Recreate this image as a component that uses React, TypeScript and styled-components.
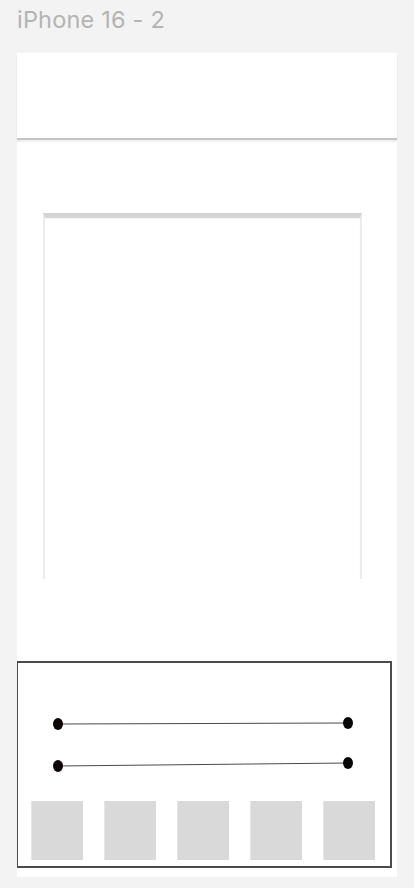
import styled, { createGlobalStyle } from "styled-components";

const GlobalStyle = createGlobalStyle`
  html, body {
    margin: 0;
    padding: 0;
    background: #f3f3f3;
  }
  body {
    font-family: Inter, "Noto Sans", sans-serif;
  }
`;

const sliders = [
  { leftY: 8, rightY: 7 },
  { leftY: 9, rightY: 6 },
];

const thumbs = [1, 2, 3, 4, 5];

function Slider({ leftY, rightY }: { leftY: number; rightY: number }) {
  return (
    <SliderSvg width="373" height="16" viewBox="0 0 373 16">
      <line x1="40" y1={leftY} x2="330" y2={rightY} stroke="#4a4a4a" strokeWidth="1" />
      <ellipse cx="40" cy={leftY} rx="5" ry="6" fill="#0d0606" />
      <ellipse cx="330" cy={rightY} rx="5" ry="6" fill="#0d0606" />
    </SliderSvg>
  );
}

export default function App() {
  return (
    <>
      <GlobalStyle />
      <Page>
        <Title>iPhone 16 - 2</Title>
        <Frame>
          <Header />
          <Stage>
            <Card />
          </Stage>
          <Panel>
            <Sliders>
              {sliders.map((s, i) => (
                <Slider key={i} leftY={s.leftY} rightY={s.rightY} />
              ))}
            </Sliders>
            <Thumbs>
              {thumbs.map((t) => (
                <Thumb key={t} />
              ))}
            </Thumbs>
          </Panel>
        </Frame>
      </Page>
    </>
  );
}

const Page = styled.div`
  width: 414px;
  height: 888px;
  padding: 0 0 0 17px;
  box-sizing: border-box;
  overflow: hidden;
`;

const Title = styled.div`
  height: 53px;
  padding-top: 5px;
  box-sizing: border-box;
  font-size: 23.5px;
  line-height: 30px;
  color: #b3b3b3;
  letter-spacing: 0.2px;
`;

const Frame = styled.div`
  width: 380px;
  height: 824px;
  background: #ffffff;
  display: flex;
  flex-direction: column;
`;

const Header = styled.div`
  height: 85px;
  flex-shrink: 0;
  border-bottom: 2px solid #c4c4c4;
  box-shadow: 0 2px 2px rgba(0, 0, 0, 0.08);
`;

const Stage = styled.div`
  flex: 1;
  padding: 73px 0 0 26px;
`;

const Card = styled.div`
  width: 319px;
  height: 366px;
  box-sizing: border-box;
  border-top: 5px solid #d4d4d4;
  border-left: 2px solid #ececec;
  border-right: 2px solid #ececec;
  box-shadow: inset 0 1px 2px rgba(0, 0, 0, 0.04);
`;

const Panel = styled.div`
  width: 375px;
  height: 207px;
  margin-bottom: 9px;
  box-sizing: border-box;
  border: 1px solid #4f4a4a;
  border-top-width: 2px;
  border-right-width: 2px;
  border-bottom-width: 2px;
  display: flex;
  flex-direction: column;
`;

const Sliders = styled.div`
  display: flex;
  flex-direction: column;
  gap: 25px;
  padding-top: 53px;
`;

const SliderSvg = styled.svg`
  display: block;
`;

const Thumbs = styled.div`
  display: flex;
  gap: 21px;
  padding: 28px 0 0 13px;
`;

const Thumb = styled.div`
  width: 52px;
  height: 59px;
  background: #d9d9d9;
  border-left: 1px solid #e6e6e6;
  box-sizing: border-box;
`;
